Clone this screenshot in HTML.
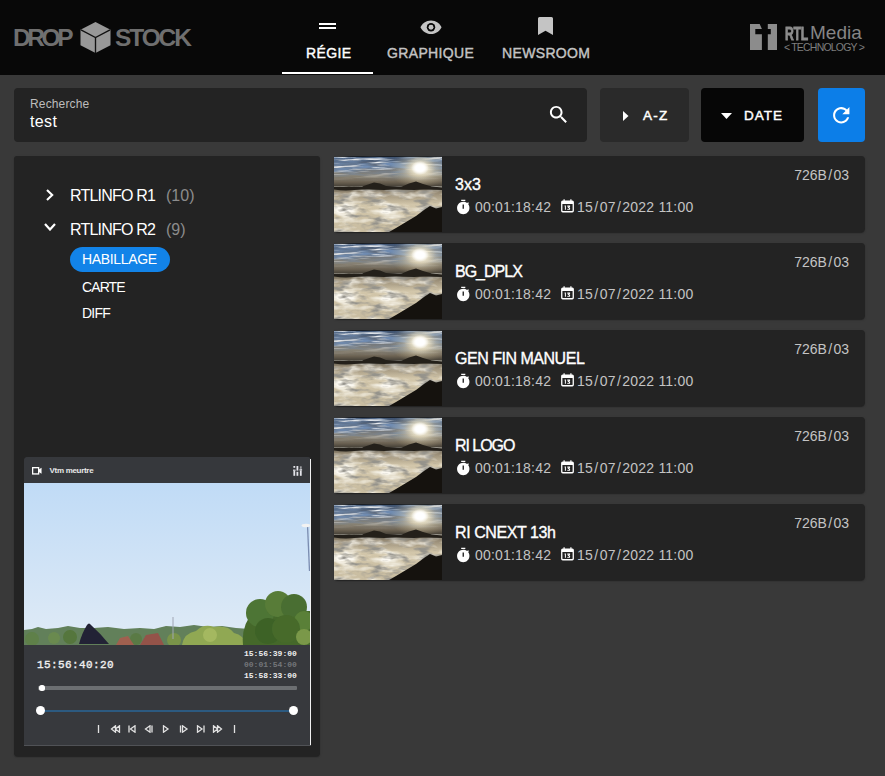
<!DOCTYPE html>
<html><head><meta charset="utf-8">
<style>
*{box-sizing:border-box;margin:0;padding:0}
html,body{width:885px;height:776px;overflow:hidden;background:#393939;font-family:"Liberation Sans",sans-serif;color:#fff}
.abs{position:absolute}
#hdr{left:0;top:0;width:885px;height:75px;background:#080808}
.logo{font-weight:bold;font-size:24px;color:#6f6f6f;line-height:24px;letter-spacing:-1px}
.nav{font-size:14px;letter-spacing:0.35px;line-height:14px;white-space:nowrap;-webkit-text-stroke:0.4px currentColor}
.box{background:#232323;border-radius:4px}
.btn{border-radius:4px;font-size:13.5px;letter-spacing:1.5px;line-height:14px;-webkit-text-stroke:0.45px currentColor}
.t16{font-size:16px;line-height:16px;white-space:nowrap}
.t14{font-size:14px;line-height:14px;white-space:nowrap}
.card{left:334px;width:531px;height:76px;background:#232323;border-radius:4px;box-shadow:0 2px 1px -1px rgba(0,0,0,.2),0 1px 1px 0 rgba(0,0,0,.14),0 1px 3px 0 rgba(0,0,0,.12)}
.card .th{position:absolute;left:0;top:0;width:108px;height:76px}
.card .ti{position:absolute;left:121px;top:21px;font-size:16px;line-height:16px;color:#fff;white-space:nowrap;-webkit-text-stroke:0.35px #fff}
.card .me{position:absolute;left:141px;top:43.8px;font-size:14px;line-height:14px;color:#c4c4c4;white-space:nowrap;letter-spacing:0.2px}
.card .dt{position:absolute;left:243px;top:43.8px;font-size:14px;line-height:14px;color:#c4c4c4;white-space:nowrap;letter-spacing:0.2px}
.card i{font-style:normal;padding:0 1.3px}
.card .ic1{position:absolute;left:120.6px;top:42.6px}
.card .ic2{position:absolute;left:227px;top:43.3px}
.card .rt{position:absolute;right:16px;top:11.5px;font-size:14px;line-height:14px;color:#c4c4c4}
</style></head><body>
<div id="hdr" class="abs"></div>

<svg width="0" height="0" style="position:absolute">
<defs>
  <linearGradient id="sky" x1="0" y1="0" x2="0" y2="1">
    <stop offset="0" stop-color="#3a5070"/>
    <stop offset="0.15" stop-color="#6a7482"/>
    <stop offset="0.26" stop-color="#8a8476"/>
    <stop offset="0.34" stop-color="#6e6454"/>
    <stop offset="0.41" stop-color="#3e3a32"/>
  </linearGradient>
  <radialGradient id="sun" cx="0.5" cy="0.5" r="0.5">
    <stop offset="0" stop-color="#ffffff" stop-opacity="1"/>
    <stop offset="0.3" stop-color="#fdf8e6" stop-opacity="0.9"/>
    <stop offset="0.65" stop-color="#e4d6b0" stop-opacity="0.4"/>
    <stop offset="1" stop-color="#c8b890" stop-opacity="0"/>
  </radialGradient>
  <radialGradient id="core" cx="0.5" cy="0.5" r="0.5"><stop offset="0" stop-color="#fff"/><stop offset="0.45" stop-color="#fff"/><stop offset="1" stop-color="#fff" stop-opacity="0"/></radialGradient>
  <linearGradient id="cloud" x1="0" y1="0" x2="0" y2="1">
    <stop offset="0" stop-color="#4a463c"/>
    <stop offset="0.14" stop-color="#968a74"/>
    <stop offset="0.4" stop-color="#d2c6aa"/>
    <stop offset="1" stop-color="#c8bca0"/>
  </linearGradient>
  <filter id="cn" x="0" y="30" width="108" height="46" filterUnits="userSpaceOnUse">
    <feTurbulence type="fractalNoise" baseFrequency="0.06 0.16" numOctaves="3" seed="7"/>
    <feColorMatrix type="matrix" values="0 0 0 0 0.3  0 0 0 0 0.29  0 0 0 0 0.26  4 0 0 0 -1.95"/>
  </filter>
  <filter id="cl" x="0" y="30" width="108" height="46" filterUnits="userSpaceOnUse">
    <feTurbulence type="fractalNoise" baseFrequency="0.045 0.12" numOctaves="3" seed="3"/>
    <feColorMatrix type="matrix" values="0 0 0 0 0.97  0 0 0 0 0.95  0 0 0 0 0.88  3 0 0 0 -1.25"/>
  </filter>
  <filter id="sn" x="0" y="0" width="108" height="28" filterUnits="userSpaceOnUse">
    <feTurbulence type="fractalNoise" baseFrequency="0.035 0.4" numOctaves="3" seed="11"/>
    <feColorMatrix type="matrix" values="0 0 0 0 0.86  0 0 0 0 0.88  0 0 0 0 0.9  3.4 0 0 0 -1.75"/>
  </filter>
  <filter id="sd" x="0" y="0" width="108" height="28" filterUnits="userSpaceOnUse">
    <feTurbulence type="fractalNoise" baseFrequency="0.04 0.3" numOctaves="2" seed="21"/>
    <feColorMatrix type="matrix" values="0 0 0 0 0.16  0 0 0 0 0.26  0 0 0 0 0.44  3 0 0 0 -1.1"/>
  </filter>
  <linearGradient id="skm" x1="0" y1="0" x2="0" y2="26" gradientUnits="userSpaceOnUse"><stop offset="0" stop-color="#fff"/><stop offset="0.45" stop-color="#fff"/><stop offset="0.85" stop-color="#222"/><stop offset="1" stop-color="#000"/></linearGradient>
  <mask id="skmask" maskUnits="userSpaceOnUse" x="0" y="0" width="108" height="30"><rect width="108" height="28" fill="url(#skm)"/></mask>
  <symbol id="thumb" viewBox="0 0 108 76">
    <rect width="108" height="76" fill="url(#sky)"/>
    <g mask="url(#skmask)"><rect width="108" height="28" filter="url(#sd)"/><rect width="108" height="27" filter="url(#sn)"/></g>
    <ellipse cx="86" cy="13" rx="30" ry="20" fill="url(#sun)" opacity="0.7"/><ellipse cx="86" cy="12" rx="16" ry="12" fill="url(#sun)"/><ellipse cx="86" cy="12" rx="9" ry="7" fill="url(#core)"/>
    <rect y="30" width="108" height="46" fill="url(#cloud)"/>
    <rect y="30" width="108" height="46" filter="url(#cl)"/>
    <rect y="30" width="108" height="46" filter="url(#cn)"/>
    <path d="M0 31 L18 31 L28 30.5 L34 28.5 L40 26.5 L46 27.5 L52 30 L68 30.5 L75 27.5 L82 25.5 L89 28 L98 30.5 L108 31.5 L108 34 Q90 33 80 34 Q60 33 50 34 Q30 33 20 34 T0 33.5z" fill="#24201a"/>
    <path d="M108 51 L102 52.5 L96 50 L90 54 L82 60 L72 66 L62 72 L55 76 L108 76z" fill="#15120e"/>
    <rect width="108" height="0.8" fill="#111"/>
  </symbol>
  <linearGradient id="vsky" x1="0" y1="0" x2="0" y2="1">
    <stop offset="0" stop-color="#c0dbf6"/>
    <stop offset="1" stop-color="#e0ebf6"/>
  </linearGradient>
</defs>
</svg>
<!-- logo -->
<div class="abs logo" style="left:13px;top:26px;letter-spacing:-3.4px;font-size:24.5px">DROP</div>
<svg class="abs" style="left:80px;top:22px" width="31" height="31" viewBox="0 0 31 32">
  <polygon points="15.5,0 31,8 31,24 15.5,32 0,24 0,8" fill="#989898"/>
  <polyline points="0.5,8.2 15.5,16 30.5,8.2" fill="none" stroke="#111" stroke-width="1.4"/>
  <line x1="15.5" y1="16" x2="15.5" y2="32" stroke="#111" stroke-width="1.4"/>
</svg>
<div class="abs logo" style="left:115px;top:26px;letter-spacing:-2.1px;font-size:24.5px">STOCK</div>


<!-- nav -->
<svg class="abs" style="left:319px;top:23px" width="17" height="6"><rect x="0" y="0" width="17" height="2" fill="#fff"/><rect x="0" y="4" width="17" height="2" fill="#fff"/></svg>
<div class="abs nav" style="left:306px;top:46px;color:#fff">RÉGIE</div>
<div class="abs" style="left:282px;top:72px;width:91px;height:2px;background:#fff"></div>
<svg class="abs" style="left:420px;top:20px" width="22" height="14.5" viewBox="0 0 24 16" preserveAspectRatio="none">
  <path d="M12 0.5C6.5 0.5 2.2 4 0.5 8c1.7 4 6 7.5 11.5 7.5S21.8 12 23.5 8C21.8 4 17.5 0.5 12 0.5z" fill="#c4c4c4"/>
  <circle cx="12" cy="8" r="4.6" fill="#080808"/><circle cx="12" cy="8" r="2.7" fill="#c4c4c4"/>
</svg>
<div class="abs nav" style="left:387px;top:46px;color:#c4c4c4">GRAPHIQUE</div>
<svg class="abs" style="left:538px;top:17px" width="15" height="18" viewBox="0 0 15 18">
  <path d="M1.5 0h12a1.5 1.5 0 0 1 1.5 1.5V18l-7.5-4.2L0 18V1.5A1.5 1.5 0 0 1 1.5 0z" fill="#c4c4c4"/>
</svg>
<div class="abs nav" style="left:502px;top:46px;color:#c4c4c4">NEWSROOM</div>
<!-- RTL media -->
<svg class="abs" style="left:750px;top:24px" width="27" height="26" viewBox="0 0 27 26">
  <rect x="0" y="0" width="27" height="26" fill="#8c8c8c"/>
  <path d="M9.7 0H17.8V5H20.8V10.2H17.8V26H11.9V10.2H5.3V5H11.9Z" fill="#080808"/>
</svg>
<div class="abs" style="left:785px;top:23.5px;font-weight:bold;font-size:19px;line-height:19px;color:#8c8c8c;letter-spacing:-0.3px;transform:scaleX(0.64);transform-origin:0 0;-webkit-text-stroke:0.9px #8c8c8c">RTL</div>
<div class="abs" style="left:810px;top:23px;font-size:19px;line-height:19px;color:#858585;letter-spacing:0px">Media</div>
<div class="abs" style="left:784px;top:42px;font-size:10.5px;line-height:11px;color:#7e7e7e;white-space:nowrap;letter-spacing:-0.8px">&lt; TECHNOLOGY &gt;</div>
<!-- search -->
<div class="abs box" style="left:14px;top:88px;width:573px;height:53.5px"></div>
<div class="abs" style="left:30px;top:98px;font-size:12px;line-height:12px;color:#bdbdbd;letter-spacing:0.15px">Recherche</div>
<div class="abs" style="left:30px;top:114px;font-size:16px;line-height:16px;color:#fff;letter-spacing:0.35px">test</div>
<svg class="abs" style="left:547px;top:103px" width="23.3" height="23.3" viewBox="0 0 24 24"><path fill="#fff" d="M15.5 14h-.79l-.28-.27C15.41 12.59 16 11.11 16 9.5 16 5.91 13.09 3 9.5 3S3 5.91 3 9.5 5.91 16 9.5 16c1.610 0 3.09-.59 4.23-1.57l.27.28v.79l5 4.99L20.49 19l-4.99-5zm-6 0C7.01 14 5 11.990 5 9.5S7.01 5 9.5 5 14 7.01 14 9.5 11.99 14 9.5 14z"/></svg>
<div class="abs btn" style="left:600px;top:88px;width:89px;height:53.5px;background:#2a2a2a"></div>
<svg class="abs" style="left:623px;top:111px" width="6" height="10"><polygon points="0,0 5.5,5 0,10" fill="#fff"/></svg>
<div class="abs btn" style="left:643px;top:109px;color:#fff;letter-spacing:1.3px">A-Z</div>
<div class="abs btn" style="left:701px;top:88px;width:103px;height:53.5px;background:#060606"></div>
<svg class="abs" style="left:721px;top:113px" width="11" height="6"><polygon points="0,0 11,0 5.5,6" fill="#fff"/></svg>
<div class="abs btn" style="left:744px;top:109px;color:#fff;letter-spacing:1.0px">DATE</div>
<div class="abs btn" style="left:818px;top:88px;width:47px;height:53.5px;background:#0c7ee8"></div>
<svg class="abs" style="left:829px;top:103px" width="24.5" height="24.5" viewBox="0 0 24 24"><path fill="#fff" d="M17.65 6.35C16.2 4.9 14.21 4 12 4c-4.42 0-7.99 3.58-7.99 8s3.57 8 7.99 8c3.730 0 6.84-2.550 7.73-6h-2.08c-.82 2.33-3.04 4-5.65 4-3.31 0-6-2.69-6-6s2.69-6 6-6c1.66 0 3.14.69 4.22 1.78L13 11h7V4l-2.35 2.35z"/></svg>

<!-- left panel -->
<div class="abs box" style="left:14px;top:156px;width:306px;height:600px;border-radius:3px;box-shadow:0 2px 1px -1px rgba(0,0,0,.2),0 1px 1px 0 rgba(0,0,0,.14),0 1px 3px 0 rgba(0,0,0,.12)"></div>
<svg class="abs" style="left:44.5px;top:189px" width="10" height="12" viewBox="0 0 10 12"><polyline points="2,1 7.2,6 2,11" fill="none" stroke="#fff" stroke-width="2.1"/></svg>
<div class="abs t16" style="left:70px;top:188px;color:#fff;letter-spacing:-0.8px">RTLINFO R1</div>
<div class="abs t16" style="left:166px;top:188px;color:#8c8c8c">(10)</div>
<svg class="abs" style="left:44px;top:223px" width="12" height="8" viewBox="0 0 12 8"><polyline points="1,1 6,6.5 11,1" fill="none" stroke="#fff" stroke-width="2.2"/></svg>
<div class="abs t16" style="left:70px;top:222px;color:#fff;letter-spacing:-0.8px">RTLINFO R2</div>
<div class="abs t16" style="left:166px;top:222px;color:#8c8c8c">(9)</div>
<div class="abs" style="left:70px;top:247px;width:100px;height:25px;border-radius:13px;background:#1283e8"></div>
<div class="abs t14" style="left:82px;top:252px;color:#fff;letter-spacing:-0.35px">HABILLAGE</div>
<div class="abs t14" style="left:82px;top:280px;color:#fff;letter-spacing:-0.9px">CARTE</div>
<div class="abs t14" style="left:82px;top:306px;color:#fff;letter-spacing:-0.8px">DIFF</div>

<!-- player -->
<div class="abs" style="left:24px;top:457px;width:287px;height:289px;border-radius:4px 4px 0 0;overflow:hidden;background:#37393d;border-bottom:1px solid #505256">
  <div class="abs" style="left:0;top:0;width:286px;height:26px;background:#36383c"></div>
  <svg class="abs" style="left:8px;top:10px" width="10" height="7.6" viewBox="0 0 11 8" preserveAspectRatio="none"><rect x="0.7" y="0.7" width="6.6" height="6.6" fill="none" stroke="#fff" stroke-width="1.4"/><polygon points="7,3 10.5,0.8 10.5,7.2 7,5" fill="#fff"/></svg>
  <div class="abs" style="left:25.5px;top:10px;font-size:8px;line-height:8px;font-weight:bold;color:#e8e8e8;white-space:nowrap;letter-spacing:-0.3px">Vtm meurtre</div>
  <svg class="abs" style="left:268.5px;top:9px" width="10" height="10" viewBox="0 0 10 10"><g fill="#e4e4ea"><rect x="0.4" y="0" width="1.8" height="1.8"/><rect x="0" y="3.6" width="2.6" height="1.2"/><rect x="0.4" y="4.8" width="1.8" height="5"/><rect x="3.5" y="0" width="1.8" height="4.6"/><rect x="3.5" y="5.8" width="1.8" height="4"/><rect x="6.9" y="0.3" width="1.8" height="2.5" opacity="0.6"/><rect x="6.5" y="3.2" width="2.6" height="1.3"/><rect x="6.9" y="4.5" width="1.8" height="5.3"/></g></svg>
  <svg class="abs" style="left:0;top:26px" width="286" height="162" viewBox="0 0 286 162">
    <defs><filter id="bl" x="-5%" y="-5%" width="110%" height="110%"><feGaussianBlur stdDeviation="0.7"/></filter></defs>
    <rect width="286" height="162" fill="url(#vsky)"/>
    <g filter="url(#bl)">
    <path d="M0 147 L8 146 L14 144 L22 146 L34 145 L44 143 L56 145 L70 145 L84 144 L100 146 L116 145 L130 146 L142 143 L156 144 L170 142 L184 144 L198 143 L212 145 L226 146 L230 162 L0 162z" fill="#62805a"/>
    <circle cx="8" cy="156" r="7" fill="#5e8048"/>
    <circle cx="30" cy="155" r="6" fill="#6a8a50"/>
    <circle cx="46" cy="154" r="7" fill="#54763c"/>
    <circle cx="64" cy="152" r="5" fill="#6a8a48"/>
    <path d="M55 161 Q58 150 63 142 Q65 139 67 142 Q76 150 85 161z" fill="#242236"/>
    <circle cx="112" cy="156" r="6" fill="#5a7a44"/>
    <path d="M92 162 L96 155 L104 153 L110 162z" fill="#a06050"/>
    <path d="M116 162 L122 152 L134 150 L140 162z" fill="#94524a"/>
    <path d="M158 162 Q160 150 172 148 Q180 140 190 144 Q204 142 210 150 Q220 152 222 162z" fill="#90a852"/><circle cx="186" cy="152" r="7" fill="#a4b860"/>
    <circle cx="150" cy="157" r="7" fill="#7a9448"/>
    <path d="M219 162 Q217 142 230 128 L286 128 L286 162z" fill="#44682c"/>
    <circle cx="236" cy="130" r="14" fill="#4e7434"/>
    <circle cx="254" cy="121" r="13" fill="#587c38"/>
    <circle cx="270" cy="124" r="13" fill="#4a6e30"/>
    <circle cx="280" cy="138" r="10" fill="#5a8038"/>
    <circle cx="244" cy="148" r="13" fill="#3e6228"/>
    <circle cx="262" cy="146" r="14" fill="#466a2c"/>
    <circle cx="280" cy="154" r="8" fill="#7a9848"/>
    </g>
    <line x1="149" y1="134" x2="149" y2="156" stroke="#a0a6b4" stroke-width="1"/>
    <line x1="283.5" y1="42" x2="285.5" y2="88" stroke="#7a8cb0" stroke-width="1.3"/>
    <ellipse cx="282" cy="42.5" rx="4.5" ry="1.8" fill="#f2f2f2"/>
  </svg>
  <div class="abs" style="left:13px;top:202px;font-family:'Liberation Mono',monospace;font-size:11px;line-height:12px;color:#f0f0f0;letter-spacing:0.4px;-webkit-text-stroke:0.35px #f0f0f0;white-space:nowrap">15:56:40:20</div>
  <div class="abs" style="left:220px;top:191px;font-family:'Liberation Mono',monospace;font-weight:bold;font-size:8px;line-height:11px;white-space:nowrap;text-align:right"><span style="color:#f0f0f0">15:56:39:00</span><br><span style="color:#74767a">00:01:54:00</span><br><span style="color:#f0f0f0">15:58:33:00</span></div>
  <div class="abs" style="left:14px;top:229px;width:259px;height:4px;border-radius:1px;background:#6c6f72"></div>
  <div class="abs" style="left:14.5px;top:227.5px;width:6px;height:6px;border-radius:2.5px;background:#fff"></div>
  <div class="abs" style="left:17px;top:253px;width:253px;height:2px;background:#2c5a80"></div>
  <div class="abs" style="left:12px;top:249px;width:9px;height:9px;border-radius:50%;background:#fff"></div>
  <div class="abs" style="left:265px;top:249px;width:9px;height:9px;border-radius:50%;background:#fff"></div>
  <svg class="abs" style="left:72px;top:268px" width="145" height="8" viewBox="0 0 145 8">
    <g fill="none" stroke="#e2e2e2" stroke-width="1.3">
      <line x1="2.5" y1="0" x2="2.5" y2="8"/>
      <path d="M19.5 0.8L15.5 4L19.5 7.2z M23.5 0.8L19.5 4L23.5 7.2z"/>
      <line x1="33" y1="0.5" x2="33" y2="7.5"/><path d="M39 0.8L34.5 4L39 7.2z"/>
      <path d="M54 0.8L49.5 4L54 7.2z"/><line x1="56" y1="0.5" x2="56" y2="7.5"/>
      <path d="M67.5 0.8L72 4L67.5 7.2z"/>
      <line x1="84.5" y1="0.5" x2="84.5" y2="7.5"/><path d="M86.5 0.8L91 4L86.5 7.2z"/>
      <path d="M101.5 0.8L106 4L101.5 7.2z"/><line x1="108" y1="0.5" x2="108" y2="7.5"/>
      <path d="M117.5 0.8L121.5 4L117.5 7.2z M121.5 0.8L125.5 4L121.5 7.2z"/>
      <line x1="138.5" y1="0" x2="138.5" y2="8"/>
    </g>
  </svg>
</div>
<div class="abs" style="left:310px;top:459px;width:1px;height:286px;background:#f0f0f0"></div>
<!-- cards -->
<div class="abs card" style="top:156px"><svg class="th" viewBox="0 0 108 76" preserveAspectRatio="none"><use href="#thumb"/></svg>
<svg class="ic1" width="16.5" height="16.5" viewBox="0 0 24 24"><path fill="#fff" d="M15 1H9v2h6V1zm4.03 6.39l1.42-1.42c-.43-.51-.9-.99-1.41-1.41l-1.42 1.42C16.07 4.74 14.12 4 12 4c-4.97 0-9 4.030-9 9s4.02 9 9 9 9-4.030 9-9c0-2.12-.74-4.07-1.97-5.61zM13 14h-2V8h2v6z"/></svg>
<div class="ti">3x3</div><div class="me">00:01:18:42</div>
<svg class="ic2" width="13" height="14" viewBox="0 0 13 14"><path fill="#fff" d="M2.5 0.2h1.2v1.3h5.6V0.2h1.2v1.3h0.8a1.6 1.6 0 0 1 1.6 1.6v8.7a1.6 1.6 0 0 1-1.6 1.6H1.7a1.6 1.6 0 0 1-1.6-1.6V3.1a1.6 1.6 0 0 1 1.6-1.6h0.8z M1.4 5v6.6a.4.4 0 0 0 .4.4h9.4a.4.4 0 0 0 .4-.4V5z"/><path fill="#fff" d="M3.6 6.5h1.3v4.3h-1 v-3.3h-.3z M6.3 6.5h2.8v1.2l-1 .7h.3a.9.9 0 0 1 .7.9v.6a.9.9 0 0 1-.9.9h-1.9v-.9h1.7v-.7h-1.3v-.7l1.1-.8h-1.5z"/></svg>
<div class="dt">15<i>/</i>07<i>/</i>2022 11:00</div><div class="rt">726B<i>/</i>03</div></div>
<div class="abs card" style="top:243px"><svg class="th" viewBox="0 0 108 76" preserveAspectRatio="none"><use href="#thumb"/></svg>
<svg class="ic1" width="16.5" height="16.5" viewBox="0 0 24 24"><path fill="#fff" d="M15 1H9v2h6V1zm4.03 6.39l1.42-1.42c-.43-.51-.9-.99-1.41-1.41l-1.42 1.42C16.07 4.74 14.12 4 12 4c-4.97 0-9 4.030-9 9s4.02 9 9 9 9-4.030 9-9c0-2.12-.74-4.07-1.97-5.61zM13 14h-2V8h2v6z"/></svg>
<div class="ti" style="letter-spacing:-1.0px">BG_DPLX</div><div class="me">00:01:18:42</div>
<svg class="ic2" width="13" height="14" viewBox="0 0 13 14"><path fill="#fff" d="M2.5 0.2h1.2v1.3h5.6V0.2h1.2v1.3h0.8a1.6 1.6 0 0 1 1.6 1.6v8.7a1.6 1.6 0 0 1-1.6 1.6H1.7a1.6 1.6 0 0 1-1.6-1.6V3.1a1.6 1.6 0 0 1 1.6-1.6h0.8z M1.4 5v6.6a.4.4 0 0 0 .4.4h9.4a.4.4 0 0 0 .4-.4V5z"/><path fill="#fff" d="M3.6 6.5h1.3v4.3h-1 v-3.3h-.3z M6.3 6.5h2.8v1.2l-1 .7h.3a.9.9 0 0 1 .7.9v.6a.9.9 0 0 1-.9.9h-1.9v-.9h1.7v-.7h-1.3v-.7l1.1-.8h-1.5z"/></svg>
<div class="dt">15<i>/</i>07<i>/</i>2022 11:00</div><div class="rt">726B<i>/</i>03</div></div>
<div class="abs card" style="top:330px"><svg class="th" viewBox="0 0 108 76" preserveAspectRatio="none"><use href="#thumb"/></svg>
<svg class="ic1" width="16.5" height="16.5" viewBox="0 0 24 24"><path fill="#fff" d="M15 1H9v2h6V1zm4.03 6.39l1.42-1.42c-.43-.51-.9-.99-1.41-1.41l-1.42 1.42C16.07 4.74 14.12 4 12 4c-4.97 0-9 4.030-9 9s4.02 9 9 9 9-4.030 9-9c0-2.12-.74-4.07-1.97-5.61zM13 14h-2V8h2v6z"/></svg>
<div class="ti" style="letter-spacing:-0.48px">GEN FIN MANUEL</div><div class="me">00:01:18:42</div>
<svg class="ic2" width="13" height="14" viewBox="0 0 13 14"><path fill="#fff" d="M2.5 0.2h1.2v1.3h5.6V0.2h1.2v1.3h0.8a1.6 1.6 0 0 1 1.6 1.6v8.7a1.6 1.6 0 0 1-1.6 1.6H1.7a1.6 1.6 0 0 1-1.6-1.6V3.1a1.6 1.6 0 0 1 1.6-1.6h0.8z M1.4 5v6.6a.4.4 0 0 0 .4.4h9.4a.4.4 0 0 0 .4-.4V5z"/><path fill="#fff" d="M3.6 6.5h1.3v4.3h-1 v-3.3h-.3z M6.3 6.5h2.8v1.2l-1 .7h.3a.9.9 0 0 1 .7.9v.6a.9.9 0 0 1-.9.9h-1.9v-.9h1.7v-.7h-1.3v-.7l1.1-.8h-1.5z"/></svg>
<div class="dt">15<i>/</i>07<i>/</i>2022 11:00</div><div class="rt">726B<i>/</i>03</div></div>
<div class="abs card" style="top:417px"><svg class="th" viewBox="0 0 108 76" preserveAspectRatio="none"><use href="#thumb"/></svg>
<svg class="ic1" width="16.5" height="16.5" viewBox="0 0 24 24"><path fill="#fff" d="M15 1H9v2h6V1zm4.03 6.39l1.42-1.42c-.43-.51-.9-.99-1.41-1.41l-1.42 1.42C16.07 4.74 14.12 4 12 4c-4.97 0-9 4.030-9 9s4.02 9 9 9 9-4.030 9-9c0-2.12-.74-4.07-1.97-5.61zM13 14h-2V8h2v6z"/></svg>
<div class="ti" style="letter-spacing:-1.05px">RI LOGO</div><div class="me">00:01:18:42</div>
<svg class="ic2" width="13" height="14" viewBox="0 0 13 14"><path fill="#fff" d="M2.5 0.2h1.2v1.3h5.6V0.2h1.2v1.3h0.8a1.6 1.6 0 0 1 1.6 1.6v8.7a1.6 1.6 0 0 1-1.6 1.6H1.7a1.6 1.6 0 0 1-1.6-1.6V3.1a1.6 1.6 0 0 1 1.6-1.6h0.8z M1.4 5v6.6a.4.4 0 0 0 .4.4h9.4a.4.4 0 0 0 .4-.4V5z"/><path fill="#fff" d="M3.6 6.5h1.3v4.3h-1 v-3.3h-.3z M6.3 6.5h2.8v1.2l-1 .7h.3a.9.9 0 0 1 .7.9v.6a.9.9 0 0 1-.9.9h-1.9v-.9h1.7v-.7h-1.3v-.7l1.1-.8h-1.5z"/></svg>
<div class="dt">15<i>/</i>07<i>/</i>2022 11:00</div><div class="rt">726B<i>/</i>03</div></div>
<div class="abs card" style="top:504px"><svg class="th" viewBox="0 0 108 76" preserveAspectRatio="none"><use href="#thumb"/></svg>
<svg class="ic1" width="16.5" height="16.5" viewBox="0 0 24 24"><path fill="#fff" d="M15 1H9v2h6V1zm4.03 6.39l1.42-1.42c-.43-.51-.9-.99-1.41-1.41l-1.42 1.42C16.07 4.74 14.12 4 12 4c-4.97 0-9 4.030-9 9s4.02 9 9 9 9-4.030 9-9c0-2.12-.74-4.07-1.97-5.61zM13 14h-2V8h2v6z"/></svg>
<div class="ti" style="letter-spacing:-0.42px">RI CNEXT 13h</div><div class="me">00:01:18:42</div>
<svg class="ic2" width="13" height="14" viewBox="0 0 13 14"><path fill="#fff" d="M2.5 0.2h1.2v1.3h5.6V0.2h1.2v1.3h0.8a1.6 1.6 0 0 1 1.6 1.6v8.7a1.6 1.6 0 0 1-1.6 1.6H1.7a1.6 1.6 0 0 1-1.6-1.6V3.1a1.6 1.6 0 0 1 1.6-1.6h0.8z M1.4 5v6.6a.4.4 0 0 0 .4.4h9.4a.4.4 0 0 0 .4-.4V5z"/><path fill="#fff" d="M3.6 6.5h1.3v4.3h-1 v-3.3h-.3z M6.3 6.5h2.8v1.2l-1 .7h.3a.9.9 0 0 1 .7.9v.6a.9.9 0 0 1-.9.9h-1.9v-.9h1.7v-.7h-1.3v-.7l1.1-.8h-1.5z"/></svg>
<div class="dt">15<i>/</i>07<i>/</i>2022 11:00</div><div class="rt">726B<i>/</i>03</div></div>
</body></html>
